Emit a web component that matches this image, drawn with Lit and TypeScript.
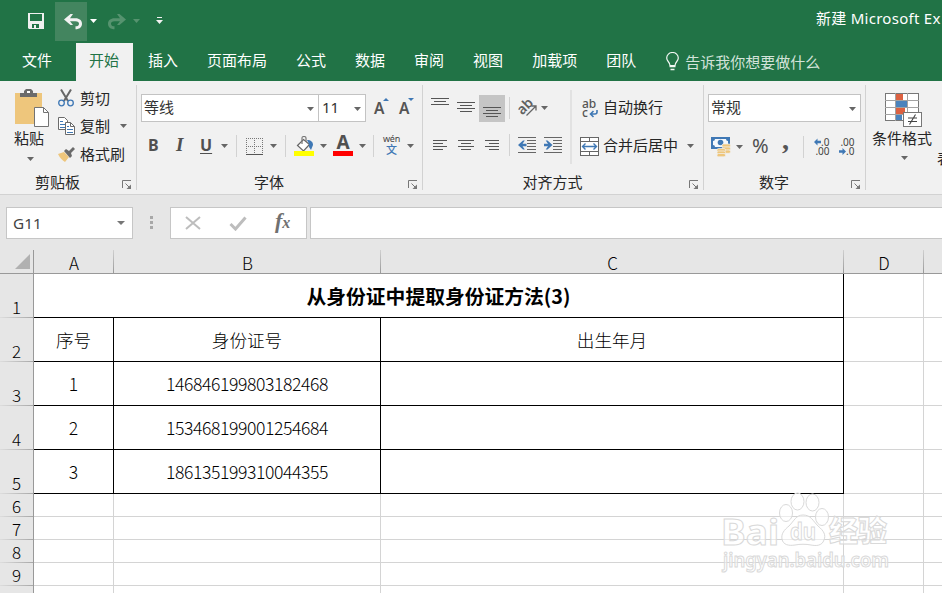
import { LitElement, html, css, svg } from "lit";
import { customElement } from "lit/decorators.js";

const caret = html`<svg class="caret" width="7" height="4" viewBox="0 0 7 4"><path d="M0 0h7L3.5 4z" fill="currentColor" /></svg>`;
const launcher = html`<svg class="launcher" width="10" height="10" viewBox="0 0 10 10" fill="none" stroke="#777">
  <path d="M.5 8V.5H9M3.5 3.5l4 4" /><path d="M9 4.5V9H4.5z" fill="#777" stroke="none" /></svg>`;

const bars = (w: number, h: number, rows: number[][]) => html`<svg width=${w} height=${h} viewBox="0 0 ${w} ${h}">
  ${rows.map(([x, y, n]) => svg`<rect x=${x} y=${y} width=${n} height="1" fill="#555"/>`)}</svg>`;

const saveIcon = html`<svg width="16" height="16" viewBox="0 0 16 16"><path fill="#f0f0f0" fill-rule="evenodd" d="M0 0h16v16H1l-1-1zM2 1v7h12V1zM4 11v4h2v-3h2v3h3v-4z" /></svg>`;
const undoIcon = html`<svg width="19" height="16" viewBox="0 0 19 16"><path d="M0 5.500L6.500 0H9L6 4.300h5.500c4 0 6.500 2.300 6.500 5.500 0 3.400-2.500 5.500-6.500 5.500v-3c2.300 0 3.500-.9 3.500-2.600 0-1.600-1.200-2.500-3.500-2.500H6L9 11H6.500z" fill="currentColor" /></svg>`;

const pasteIcon = html`<svg width="34" height="38" viewBox="0 0 34 38">
  <rect x="0" y="4" width="27" height="31" fill="#eec67c" />
  <path d="M5 8V4h4V2l2-2h5l2 2v2h4v4z" fill="#6b6b6b" /><rect x="12" y="2" width="3" height="2" fill="#fff" />
  <path d="M19.500 18.500h9l5 5v14h-14z" fill="#fff" stroke="#737373" /><path d="M28.500 18.500v5h5" fill="none" stroke="#737373" /></svg>`;
const cutIcon = html`<svg width="16" height="18" viewBox="0 0 16 18" fill="none">
  <path d="M3 0.500L10 12M13 0.500L6 12" stroke="#666" stroke-width="2" />
  <circle cx="3.500" cy="14" r="2.800" stroke="#3f78b5" stroke-width="1.300" /><circle cx="12.500" cy="14" r="2.800" stroke="#3f78b5" stroke-width="1.300" /></svg>`;
const copyIcon = html`<svg width="17" height="18" viewBox="0 0 17 18" fill="#fff" stroke="#6b6b6b">
  <path d="M.5.5h6l3 3v9h-9z" /><path d="M2 4.500h3M2 7.500h5M2 10.500h5" stroke="#3f78b5" />
  <path d="M7.500 5.500h5l4 4v8h-9z" /><path d="M12.500 5.500v4h4" fill="none" /><path d="M9 9.500h2M9 12.500h6M9 15.500h6" stroke="#3f78b5" /></svg>`;
const brushIcon = html`<svg width="17" height="15" viewBox="0 0 17 15">
  <path d="M0 7l6-2 5 5-4 5C4 13 2 11 0 7z" fill="#eec67c" /><path d="M6 4l2-2 3 2 4-4 2 2-4 4 1 3-2 2z" fill="#6b6b6b" /></svg>`;

const growIcon = (up: boolean) => html`<span class="grow"><b>A</b><svg width="6" height="3" viewBox="0 0 6 3"><path d=${up ? "M0 3h6L3 0z" : "M0 0h6L3 3z"} fill="#3f78b5" /></svg></span>`;
const borderIcon = html`<svg width="17" height="17" viewBox="0 0 17 17" stroke="#777" fill="none">
  <path d="M0 .5h17M0 8.500h17M.5 0v16M8.500 0v16M16.500 0v16" stroke-dasharray="1 1" /><path d="M0 16.500h17" stroke="#555" /></svg>`;
const fillIcon = html`<svg width="20" height="20" viewBox="0 0 20 20">
  <path d="M3.500 9.500l6-6 6 5-6 6.500z" fill="#fff" stroke="#666" stroke-width="1.200" /><path d="M8 8V2q0-1.500 2-1.500T12 2v4" fill="none" stroke="#777" stroke-width="1.200" />
  <path d="M13 4c4 0 6 2 6 5l-2 5-2-3V8z" fill="#3f78b5" /><rect y="15" width="20" height="5" fill="#ff0" /></svg>`;
const orientIcon = html`<svg width="20" height="20" viewBox="0 0 20 20">
  <text x="-1" y="13" transform="rotate(-45 7 9)" font-family="Noto Sans" font-size="14" font-weight="600" fill="#606060">ab</text>
  <path d="M8.500 17.500L18 8M13.500 8H18v4.500" fill="none" stroke="#666" stroke-width="1.300" /></svg>`;
const indentIcon = (left: boolean) => html`<svg width="18" height="17" viewBox="0 0 18 17">
  <path d="M0 .5h18M9 3.500h9M9 6.500h9M9 9.500h9M9 12.500h9M0 15.500h18" stroke="#666" />
  <path d=${left ? "M0 8l5-4.500h1.800L4.500 6.800H8.500v2.400h-4l2.300 3.300H5z" : "M8.500 8l-5-4.500H1.700L4 6.800H0v2.400h4l-2.300 3.300h1.800z"} fill="#3f78b5" /></svg>`;
const wrapIcon = html`<svg width="16" height="19" viewBox="0 0 16 19">
  <g font-family="Noto Sans" font-size="12" font-weight="500" fill="#555"><text x="0" y="9">ab</text><text x="0" y="18">c</text></g>
  <path d="M15 11v2q0 2-2 2H9M11.500 12L8.500 15l3 3" fill="none" stroke="#3f78b5" stroke-width="1.600" /></svg>`;
const mergeIcon = html`<svg width="19" height="19" viewBox="0 0 19 19" fill="#fff" stroke="#666">
  <rect x=".5" y=".5" width="18" height="18" /><path d="M0 4.500h19M0 14.500h19M9.500 0v4.500M9.500 14.500V19" />
  <path d="M3 9.500h13M5.500 6.500l-3 3 3 3M13.500 6.500l3 3-3 3" fill="none" stroke="#3f78b5" stroke-width="1.400" /></svg>`;
const moneyIcon = html`<svg width="20" height="20" viewBox="0 0 20 20">
  <rect x="0" y="0" width="19" height="12" fill="#3f78b5" /><path d="M2 4q2 0 2-2h11q0 2 2 2v4q-2 0-2 2H4q0-2-2-2z" fill="#f4f8fc" /><circle cx="9.500" cy="5.500" r="2.800" fill="#3f78b5" />
  <g fill="#eec67c" stroke="#f1f1f1" stroke-width=".7"><rect x="11" y="7" width="8.500" height="3.300" rx="1.500" /><rect x="11" y="10" width="8.500" height="3.300" rx="1.500" /><rect x="11" y="13" width="8.500" height="3.300" rx="1.500" /><rect x="6" y="11.500" width="8.500" height="3.300" rx="1.500" /><rect x="6" y="14" width="8.500" height="3" rx="1.500" /><rect x="6" y="16.500" width="8.500" height="3.300" rx="1.500" /></g></svg>`;
const decIcon = (more: boolean) => html`<svg width="18" height="18" viewBox="0 0 18 18">
  <g font-family="Noto Sans" font-size="10" fill="#444" text-anchor="end">
  <text x="15.500" y="7.800">${more ? ".0" : ".00"}</text><text x="15.500" y="17">${more ? ".00" : ".0"}</text></g>
  <path d=${more ? "M0 4l3.500-3.500v2.300H7v2.400H3.500v2.300z" : "M7 13.500l-3.500-3.500v2.300H0v2.400h3.500v2.300z"} fill="#3f78b5" /></svg>`;
const condIcon = html`<svg width="37" height="35" viewBox="0 0 37 35">
  <rect x=".5" y=".5" width="33" height="27" fill="#fff" stroke="#777" />
  <path d="M0 7.500h34M0 14.500h34M0 21.500h34M10.500 0v28M22.500 0v28" stroke="#a2a2a2" />
  <path d="M11 1h7v6h-7zM11 15h9v6h-9z" fill="#dc6141" /><path d="M11 8h11v6H11zM11 22h6v5h-6z" fill="#4a83bd" />
  <rect x="18.500" y="19.500" width="18" height="14" fill="#fff" stroke="#777" /><path d="M23 25h9M23 28.500h9M30.500 21.500l-6 10" stroke="#444" stroke-width="1.100" /></svg>`;
const bulbIcon = html`<svg width="13" height="19" viewBox="0 0 13 19" fill="none" stroke="#f2f8f4">
  <path d="M4 13.500C4 10 .7 9.500.7 6a5.800 5.500 0 0 1 11.600 0C12.300 9.500 9 10 9 13.500z" stroke-width="1.200" /><path d="M3.500 14.500h6M4.500 17.500h4" stroke-width="1.600" /></svg>`;

@customElement("excel-ribbon")
class ExcelRibbon extends LitElement {
  static styles = css`
    :host { display: flex; height: 113px; background: #f1f1f1; border-bottom: 1px solid #d2d2d2; color: #262626; font: 15px/20px "Noto Sans CJK SC", sans-serif; overflow: hidden; }
    svg { display: block; flex: none; }
    .group { position: relative; flex: none; box-sizing: border-box; height: 113px; }
    .group::after { content: ""; position: absolute; right: 0; top: 4px; height: 105px; width: 1px; background: #d2d2d2; }
    .body { height: 91px; display: flex; }
    .label { text-align: center; height: 20px; padding-right: 22px; }
    .launcher { position: absolute; right: 5px; bottom: 4px; }
    .caret { color: #666; }
    .clip { width: 137px; } .font { width: 286px; } .align { width: 281px; } .number { width: 162px; }
    .paste { width: 58px; box-sizing: border-box; padding: 8px 0 0 14px; }
    .paste svg { margin-left: 1px; } .paste .caret { margin: 9px 0 0 13px; }
    .paste div { margin-top: 1px; }
    .tools { padding-top: 4px; }
    .tool { display: grid; grid-template-columns: 22px 40px 7px; align-items: center; height: 28px; white-space: nowrap; }
    .tool span, .row > span:not([class]), .combo span { margin-top: -2px; }
    .tool svg { margin-top: -2px; }
    .stack { flex-direction: column; display: flex; }
    .row { display: grid; align-items: center; justify-items: start; height: 28px; margin-top: 13px; white-space: nowrap; }
    .row.second { height: 32px; margin-top: 8px; }
    .combo { box-sizing: border-box; height: 28px; width: 100%; border: 1px solid #c3c3c3; background: #fff; display: flex; align-items: center; justify-content: space-between; padding: 0 4px 0 2px; color: #333; }
    .combo .caret { margin-top: 1px; }
    .font .one { grid-template-columns: 178px 47px 25px 24px; padding-left: 4px; }
    .size { margin-left: -1px; width: 48px; padding-left: 3px; font-family: "Noto Sans", sans-serif; font-size: 15px; }
    .grow { display: flex; margin: -1px 0 0 8px; font: 15.5px/20px "Noto Sans"; color: #555; } .grow b { font-weight: 600; } .grow svg { margin-top: 0; margin-left: -1px; }
    .font .two { padding-left: 11px; grid-template-columns: 28px 24px 21px 15px 10px 24px 15px 9px 26px 13px 26px 14px 10px 24px 10px; }
    .letter { font: bold 16px/20px "Noto Sans"; color: #505050; margin-top: -2px; }
    .italic { font-family: "Liberation Serif"; font-style: italic; font-size: 19px; }
    .under { text-decoration: underline; text-underline-offset: 2px; text-decoration-thickness: 1px; }
    .two .caret { margin-top: -1px; }
    .sep { width: 1px; height: 22px; background: #d2d2d2; }
    .color { width: 20px; height: 20px; border-bottom: 5px solid #f00; box-sizing: border-box; text-align: center; font: bold 19px/13px "Noto Sans"; color: #505050; }
    .pinyin { width: 17px; text-align: center; font: 9px/8px "Noto Sans"; color: #444; letter-spacing: -.2px; margin-top: -2px; }
    .pinyin i { display: block; font: 500 11px/12px "Noto Sans CJK SC"; color: #3f78b5; }
    .left { width: 149px; border-right: 2px solid #e2e2e2; height: 74px; margin-top: 9px; box-sizing: border-box; }
    .left .row { margin-top: 4px; padding-left: 4px; grid-template-columns: 26px 26px 30px 9px 23px 10px; }
    .left .row.second { margin-top: 7px; }
    .left .second { grid-template-columns: 26px 26px 30px 9px 26px 20px; }
    .on { background: #c5c5c5; height: 27px; overflow: hidden; }
    .wrap { padding-left: 10px; grid-template-columns: 21px 80px; }
    .merge { padding-left: 8px; grid-template-columns: 23px 84px 7px; }
    .number .one { padding: 0 5px 0 4px; }
    .number .two { padding-left: 7px; grid-template-columns: 25px 16px 30px 21px 11px 25px 20px; }
    .pct { font: 20px/20px "Noto Sans"; color: #505050; margin-top: -3px; }
    .comma { font: bold 28px/20px "Liberation Serif"; color: #555; height: 34px; }
    .styles { padding: 12px 0 0 6px; width: 64px; flex: none; }
    .styles svg { margin-left: 13px; } .styles .caret { margin: 8px 0 0 29px; }
    .next { padding: 67px 0 0 1px; flex: none; }
  `;
  render() {
    return html`
      <section class="group clip">
        <div class="body">
          <div class="paste">${pasteIcon}<div>粘贴</div>${caret}</div>
          <div class="tools">
            <div class="tool">${cutIcon}<span>剪切</span></div>
            <div class="tool">${copyIcon}<span>复制</span>${caret}</div>
            <div class="tool">${brushIcon}<span>格式刷</span></div>
          </div>
        </div>
        <div class="label">剪贴板</div>${launcher}
      </section>
      <section class="group font">
        <div class="body stack">
          <div class="row one">
            <div class="combo"><span>等线</span>${caret}</div><div class="combo size"><span>11</span>${caret}</div>${growIcon(true)}${growIcon(false)}
          </div>
          <div class="row second two">
            <span class="letter">B</span><span class="letter italic">I</span><span class="letter under">U</span>${caret}<i class="sep"></i>
            ${borderIcon}${caret}<i class="sep"></i>${fillIcon}${caret}<span class="color">A</span>${caret}<i class="sep"></i>
            <span class="pinyin">wén<i>文</i></span>${caret}
          </div>
        </div>
        <div class="label">字体</div>${launcher}
      </section>
      <section class="group align">
        <div class="body">
          <div class="left">
            <div class="row">
              ${bars(26, 28, [[4, 4, 18], [7, 7, 12], [4, 10, 18]])}
              ${bars(26, 28, [[4, 8, 18], [7, 11, 12], [4, 14, 18], [7, 17, 12]])}
              <span class="on">${bars(26, 28, [[4, 12, 18], [7, 15, 12], [4, 18, 18], [7, 21, 12]])}</span>
              <i class="sep"></i>${orientIcon}${caret}
            </div>
            <div class="row second">
              ${bars(26, 12, [[6, 1, 14], [6, 4, 10], [6, 7, 14], [6, 10, 10]])}
              ${bars(26, 12, [[5, 1, 16], [8, 4, 10], [5, 7, 16], [8, 10, 10]])}
              ${bars(26, 12, [[6, 1, 14], [10, 4, 10], [6, 7, 14], [10, 10, 10]])}
              <i class="sep"></i>${indentIcon(true)}${indentIcon(false)}
            </div>
          </div>
          <div>
            <div class="row wrap">${wrapIcon}<span>自动换行</span></div>
            <div class="row second merge">${mergeIcon}<span>合并后居中</span>${caret}</div>
          </div>
        </div>
        <div class="label">对齐方式</div>${launcher}
      </section>
      <section class="group number">
        <div class="body stack">
          <div class="row one"><div class="combo"><span>常规</span>${caret}</div></div>
          <div class="row second two">${moneyIcon}${caret}<span class="pct">%</span><span class="comma">,</span><i class="sep"></i>${decIcon(true)}${decIcon(false)}</div>
        </div>
        <div class="label">数字</div>${launcher}
      </section>
      <section class="styles">${condIcon}<div>条件格式</div>${caret}</section>
      <section class="next">表</section>`;
  }
}

@customElement("sheet-grid")
class SheetGrid extends LitElement {
  static styles = css`
    :host { display: grid; grid-template-columns: 34px 80px 267px 463px 80px 18px; grid-template-rows: 24px repeat(5, 44px) repeat(5, 23px); height: 343px; overflow: hidden; font: 300 17.6px/24px "Noto Sans CJK SC", sans-serif; color: #000; background: #fff; }
    div { box-sizing: border-box; border-bottom: 1px solid #d4d4d4; display: flex; justify-content: center; align-items: center; white-space: nowrap; }
    .head { background: linear-gradient(#d0d0d0, #999) right / 1px 100% no-repeat #e6e6e6; border-bottom-color: #999; font-size: 17px; padding-top: 2px; }
    .head.last { background: #e6e6e6; }
    .side { background: linear-gradient(90deg, #ddd, #a8a8a8) bottom / 100% 1px no-repeat #e6e6e6; border-right: 1px solid #999; border-bottom: 0; align-items: flex-end; font-size: 17px; padding-bottom: 1px; line-height: 20px; }
    .corner { background: #e6e6e6; border-right: 1px solid #999; border-bottom-color: #999; justify-content: flex-end; padding-right: 3px; }
    .ink { border-right: 1px solid #000; border-bottom-color: #000; }
    .title { grid-column: 2 / 5; border-right: 1px solid #000; border-bottom-color: #000; font-weight: 700; font-size: 19.8px; }
    .num { letter-spacing: -.42px; }
    .col { border-right: 1px solid #d4d4d4; }
  `;
  render() {
    const rows = [["序号", "身份证号", "出生年月"], ["1", "146846199803182468", ""], ["2", "153468199001254684", ""], ["3", "186135199310044355", ""]];
    const tail = html`<div class="col"></div><div></div>`;
    return html`
      <div class="corner"><svg width="15" height="15" viewBox="0 0 15 15"><path d="M15 0v15H0z" fill="#b1b1b1" /></svg></div>
      ${["A", "B", "C", "D"].map((c) => html`<div class="head">${c}</div>`)}<div class="head last"></div>
      <div class="side">1</div><div class="title">从身份证中提取身份证方法(3)</div>${tail}
      ${rows.map((r, i) => html`<div class="side">${i + 2}</div>${r.map((c, j) => html`<div class="ink ${i && j === 1 ? "num" : ""}">${c}</div>`)}${tail}`)}
      ${[6, 7, 8, 9, 10].map((n) => html`<div class="side">${n}</div><div class="col"></div><div class="col"></div><div class="col"></div>${tail}`)}`;
  }
}

@customElement("app-root")
class AppRoot extends LitElement {
  static styles = css`
    :host { display: block; position: relative; width: 942px; height: 593px; overflow: hidden; background: #e6e6e6; font: 15px/20px "Noto Sans CJK SC", sans-serif; }
    svg { display: block; flex: none; }
    .top { background: #217346; color: #fff; height: 81px; }
    .quick { display: flex; height: 43px; align-items: center; padding-left: 28px; }
    .quick > * { flex: none; }
    .save { margin-top: -1px; }
    .undo { margin: -1px 0 0 11px; width: 32px; height: 39px; background: #43855f; color: #f2f2f2; }
    .undo svg { margin: 12px 0 0 9px; }
    .c1 { margin: -2px 0 0 3px; } .dim { color: #56936f; } .redo { transform: scaleX(-1); margin-left: 10px; } .c2 { margin: -2px 0 0 7px; } .more { margin: -2px 0 0 16px; }
    .doc { margin-left: 653px; white-space: nowrap; font-family: "Noto Sans", "Noto Sans CJK SC", sans-serif; letter-spacing: .27px; margin-top: -7px; }
    .tabs { display: flex; height: 38px; line-height: 33px; white-space: nowrap; }
    .tab { padding: 0 14px 0 15px; } .file { padding: 0 24px 0 22px; }
    .active { background: #f1f1f1; color: #217346; padding-left: 13px; }
    .tell { display: flex; align-items: center; gap: 6px; margin-left: 16px; color: #d3e3da; line-height: 36px; }
    .tell svg { margin-top: -2px; }
    .bar { display: flex; height: 32px; padding: 12px 0 11px 6px; }
    .box { box-sizing: border-box; border: 1px solid #c6c6c6; background: #fff; height: 32px; display: flex; align-items: center; }
    .name { width: 127px; justify-content: space-between; padding: 0 7px 0 6px; font: 15.3px/20px "Noto Sans", sans-serif; color: #444; }
    .dots { margin: 9px 17px 0 17px; }
    .fx { width: 137px; padding-left: 14px; }
    .fx svg:nth-child(2) { margin-left: 27px; }
    .fxt { margin: -2px 0 0 28px; font: italic bold 22px/22px "Liberation Serif"; color: #707070; } .fxt small { font-size: 16px; }
    .input { flex: 1; margin-left: 3px; border-right: 0; }
    .mark { position: absolute; left: 718px; top: 488px; }
  `;
  render() {
    return html`
      <header class="top">
        <div class="quick">
          <span class="save">${saveIcon}</span><span class="undo">${undoIcon}</span><span class="c1">${caret}</span>
          <span class="redo dim">${undoIcon}</span><span class="c2 dim">${caret}</span>
          <svg class="more" width="7" height="7" viewBox="0 0 7 7" fill="#f2f2f2"><path d="M1 0h5v1H1zM0 3h7L3.500 7z" /></svg>
          <span class="doc">新建 Microsoft Ex</span>
        </div>
        <nav class="tabs">
          <span class="tab file">文件</span><span class="tab active">开始</span>
          ${["插入", "页面布局", "公式", "数据", "审阅", "视图", "加载项", "团队"].map((t) => html`<span class="tab">${t}</span>`)}
          <span class="tell">${bulbIcon}<span>告诉我你想要做什么</span></span>
        </nav>
      </header>
      <excel-ribbon></excel-ribbon>
      <div class="bar">
        <div class="box name"><span>G11</span><svg width="8" height="4" viewBox="0 0 8 4"><path d="M0 0h8L4 4z" fill="#777" /></svg></div>
        <svg class="dots" width="3" height="13" viewBox="0 0 3 13" fill="#a8a8a8"><path d="M0 0h3v3H0zM0 5h3v3H0zM0 10h3v3H0z" /></svg>
        <div class="box fx">
          <svg width="17" height="14" viewBox="0 0 17 14"><path d="M1 1l14 12M15 1L1 13" fill="none" stroke="#bdbdbd" stroke-width="2" /></svg>
          <svg width="18" height="15" viewBox="0 0 18 15"><path d="M1.500 8l5 5L16.500 1.500" fill="none" stroke="#bdbdbd" stroke-width="3" /></svg>
          <span class="fxt">f<small>x</small></span>
        </div>
        <div class="box input"></div>
      </div>
      <sheet-grid></sheet-grid>
      <svg class="mark" width="178" height="90" viewBox="0 0 178 90" fill="#fff" fill-opacity=".55" stroke="#d9d9d9" font-family="Noto Sans">
        <text x="3" y="57" font-size="36" font-weight="700" textLength="58" lengthAdjust="spacingAndGlyphs">Bai</text>
        <ellipse cx="68" cy="25" rx="6.500" ry="8.500" /><ellipse cx="79.500" cy="13.500" rx="6.500" ry="8.500" /><ellipse cx="94.500" cy="14.500" rx="6.500" ry="8.500" /><ellipse cx="104" cy="29" rx="6.500" ry="8.500" />
        <path d="M85 27c8 0 10 6 15 11 6 5 8 9 6 14-2 6-8 6-13 5-5-1-11-1-16 0-6 1-12 0-13-6-1-5 2-9 7-13 5-5 7-11 14-11z" />
        <text x="72" y="52" font-size="23" font-weight="700" textLength="26" lengthAdjust="spacingAndGlyphs">du</text>
        <text x="111" y="54" font-size="29" font-weight="900" font-family="Noto Sans CJK SC">经验</text>
        <text x="5" y="79" font-size="19" font-weight="600" textLength="166" lengthAdjust="spacingAndGlyphs">jingyan.baidu.com</text>
      </svg>`;
  }
}
